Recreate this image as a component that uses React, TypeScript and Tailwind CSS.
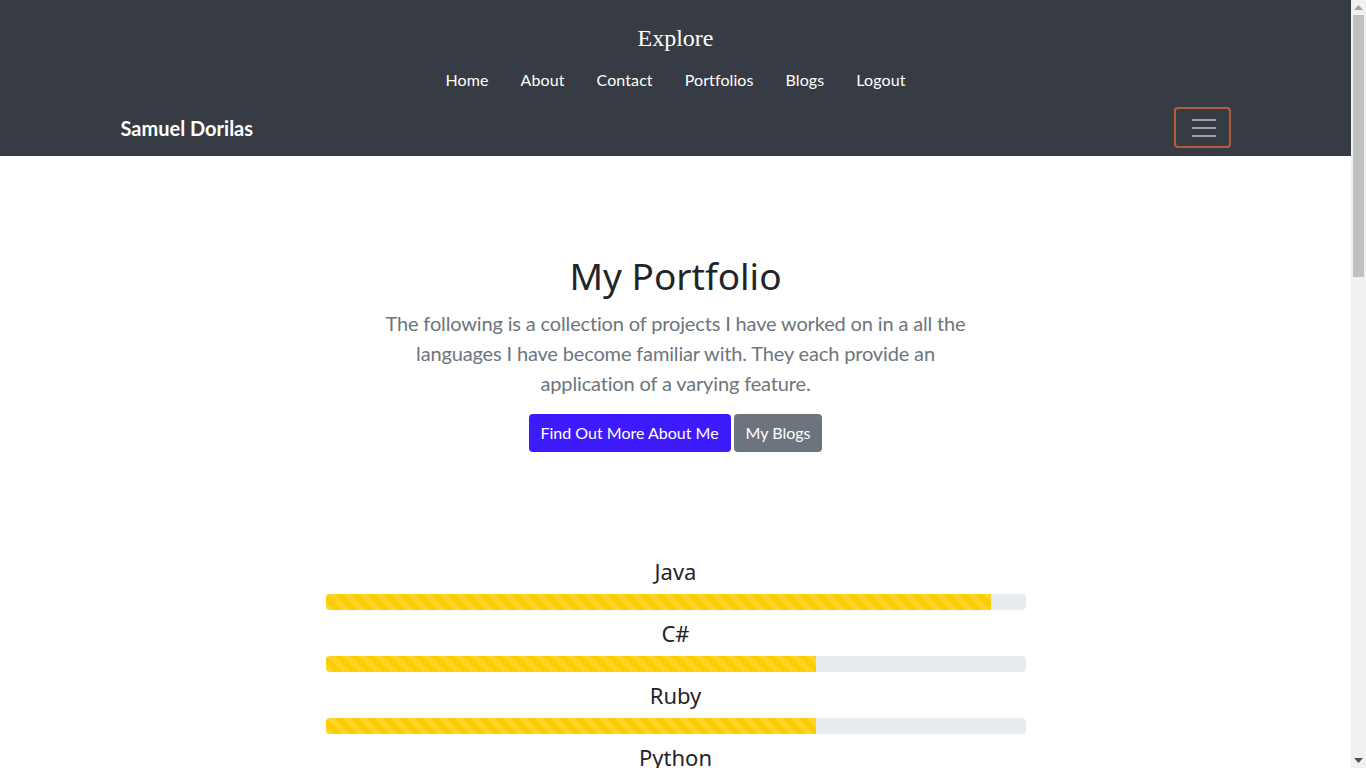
import { FC } from "react";

const links = ["Home", "About", "Contact", "Portfolios", "Blogs", "Logout"];

const skills = [
  { name: "Java", level: 95 },
  { name: "C#", level: 70 },
  { name: "Ruby", level: 70 },
  { name: "Python", level: 80 },
  { name: "JavaScript", level: 85 },
  { name: "HTML", level: 90 },
  { name: "CSS", level: 85 },
  { name: "SQL", level: 75 },
];

const stripes =
  "bg-[linear-gradient(45deg,rgba(255,255,255,.15)_25%,transparent_25%,transparent_50%,rgba(255,255,255,.15)_50%,rgba(255,255,255,.15)_75%,transparent_75%,transparent)] bg-[length:16px_16px]";

const Navbar: FC = () => {
  return (
    <nav className="bg-[#373b43] pt-2 pb-2 font-['Lato',sans-serif]">
      <div className="mx-auto max-w-[1140px] px-[15px]">
        <div className="mt-4 text-center font-['Liberation_Serif',serif] text-[24px] leading-[28px] text-white">
          Explore
        </div>
        <ul className="mt-2 flex justify-center">
          {links.map(l => (
            <li key={l}>
              <a className="block px-4 py-2 text-[16px] leading-[24px] tracking-[0.1px] text-white" href="#">{l}</a>
            </li>
          ))}
        </ul>
        <div className="mt-[7px] flex items-center justify-between">
          <a href="#" className="text-[20px] font-bold leading-[30px] text-white">Samuel Dorilas</a>
          <button className="flex h-[41px] w-[57px] items-center justify-center rounded-[4px] border-2 border-[#b35d3b]">
            <svg width="30" height="30" viewBox="0 0 30 30">
              <path d="M5 7h24M5 15h24M5 23h24" stroke="#9da0a4" strokeWidth="2" />
            </svg>
          </button>
        </div>
      </div>
    </nav>
  );
};

const Hero: FC = () => {
  return (
    <section className="pt-[96px] text-center">
      <h1 className="font-['Noto_Sans',sans-serif] text-[37px] leading-[48px] text-[#212529]">My Portfolio</h1>
      <p className="mx-auto mt-2 max-w-[600px] font-['Lato',sans-serif] text-[20px] leading-[30px] tracking-[-0.15px] text-[#6c757d]">
        The following is a collection of projects I have worked on in a all the languages I have become familiar with. They each provide an application of a varying feature.
      </p>
      <div className="mt-4 flex justify-center gap-[3px] font-['Lato',sans-serif]">
        <a href="#" className="h-[38px] rounded-[4px] bg-[#3e1bfc] px-3 text-[16px] leading-[38px] text-white">Find Out More About Me</a>
        <a href="#" className="h-[38px] rounded-[4px] bg-[#6c757d] px-3 text-[16px] leading-[38px] text-white">My Blogs</a>
      </div>
    </section>
  );
};

const Skills: FC = () => {
  return (
    <section className="mx-auto mt-[104px] w-[700px] pb-[900px]">
      {skills.map(s => (
        <div key={s.name}>
          <div className="mb-2 text-center font-['Noto_Sans',sans-serif] text-[22px] leading-[30px] text-[#212529]">{s.name}</div>
          <div className="mb-2 flex h-4 overflow-hidden rounded-[4px] bg-[#e9ecef]">
            <div className={`h-full bg-[#ffcc00] ${stripes}`} style={{ width: `${s.level}%` }} />
          </div>
        </div>
      ))}
    </section>
  );
};

// page scrollbar, as the browser draws it
const Scrollbar: FC = () => {
  return (
    <div className="flex w-[15px] shrink-0 flex-col bg-[#f1f1f1]">
      <div className="flex h-[15px] items-center justify-center">
        <svg width="9" height="5" viewBox="0 0 9 5"><path d="M4.5 0L9 5H0z" fill="#a3a3a3" /></svg>
      </div>
      <div className="mx-[2px] h-[262px] bg-[#c1c1c1]" />
      <div className="flex-1" />
      <div className="flex h-[15px] items-center justify-center">
        <svg width="9" height="5" viewBox="0 0 9 5"><path d="M0 0h9L4.5 5z" fill="#505050" /></svg>
      </div>
    </div>
  );
};

export default function App() {
  return (
    <div className="flex h-screen overflow-hidden bg-white">
      <main className="min-w-0 flex-1 overflow-hidden">
        <Navbar />
        <Hero />
        <Skills />
      </main>
      <Scrollbar />
    </div>
  );
}
